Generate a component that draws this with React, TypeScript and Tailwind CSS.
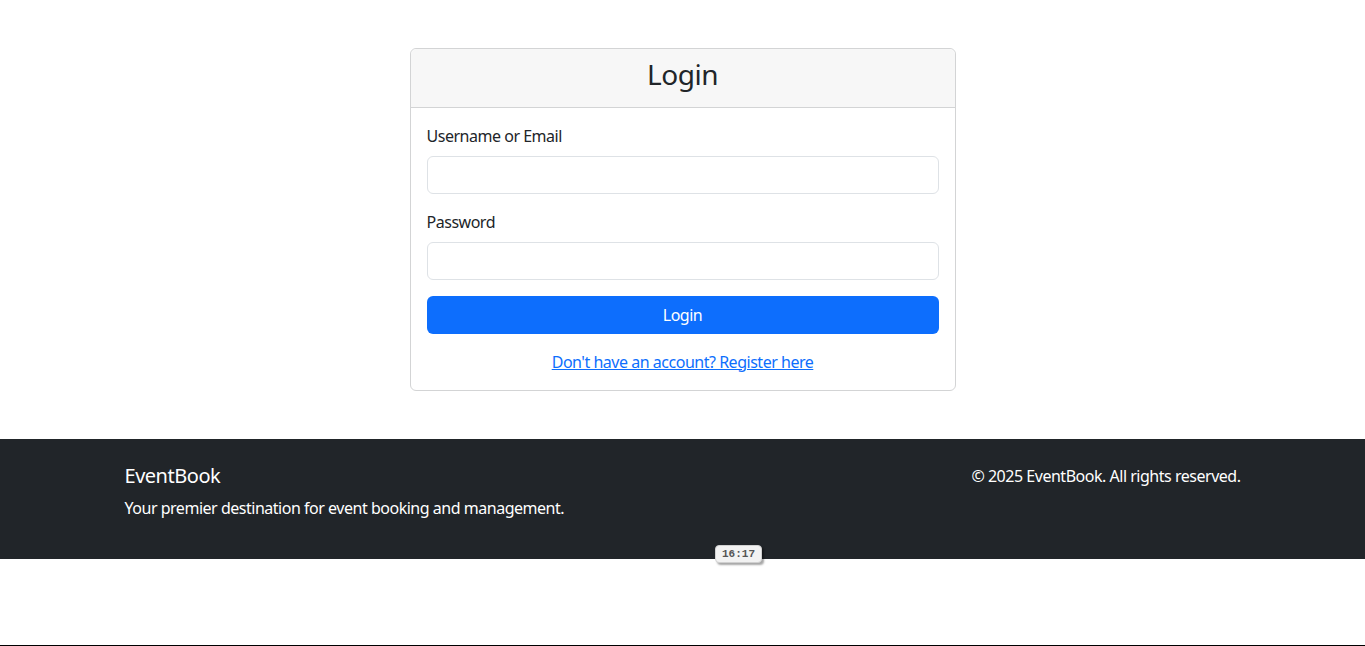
import React from 'react'

const font = { fontFamily: '"Noto Sans", "Open Sans", sans-serif' }

export default function App() {
  return (
    <div
      className="relative flex h-[646px] flex-col border-b border-black bg-white text-base tracking-[-0.03em] text-[#212529]"
      style={font}
    >
      <main className="mx-auto w-[1140px] px-3 pt-12 pb-12">
        <div className="mx-auto w-[546px] rounded-md border border-[#d3d4d5] bg-white">
          <div className="rounded-t-md border-b border-[#d3d4d5] bg-[#f7f7f7] px-4 pt-[9px] pb-[15px] text-center">
            <h3 className="text-[28px] leading-[1.2] font-normal">Login</h3>
          </div>
          <div className="p-4">
            <form onSubmit={(e) => e.preventDefault()}>
              <div className="mb-4">
                <label className="mb-2 block leading-6">Username or Email</label>
                <input
                  type="text"
                  className="block h-[38px] w-full rounded-md border border-[#dee2e6] px-3 outline-none"
                />
              </div>
              <div className="mb-4">
                <label className="mb-2 block leading-6">Password</label>
                <input
                  type="password"
                  className="block h-[38px] w-full rounded-md border border-[#dee2e6] px-3 outline-none"
                />
              </div>
              <button
                type="submit"
                className="block h-[38px] w-full rounded-md bg-[#0d6efd] leading-6 tracking-[-0.03em] text-white"
              >
                Login
              </button>
            </form>
            <p className="mt-4 text-center leading-6">
              <a href="#" className="text-[#0d6efd] underline">
                Don't have an account? Register here
              </a>
            </p>
          </div>
        </div>
      </main>

      <footer className="bg-[#212529] pt-[25px] pb-[23px] text-white">
        <div className="mx-auto flex w-[1140px] justify-between px-3">
          <div>
            <h5 className="mb-2 text-xl leading-[1.2]">EventBook</h5>
            <p className="mb-4 leading-6">Your premier destination for event booking and management.</p>
          </div>
          <div className="text-right">
            <p className="leading-6">© 2025 EventBook. All rights reserved.</p>
          </div>
        </div>
      </footer>

      <div className="absolute top-[545px] left-[715px] flex h-[18px] w-[47px] items-center justify-center rounded-sm border border-[#d0d0d0] bg-[#f2f2f2] font-mono text-[11px] font-bold tracking-normal text-[#555] shadow-[2px_2px_2px_rgba(0,0,0,0.35)]">
        16:17
      </div>
    </div>
  )
}
